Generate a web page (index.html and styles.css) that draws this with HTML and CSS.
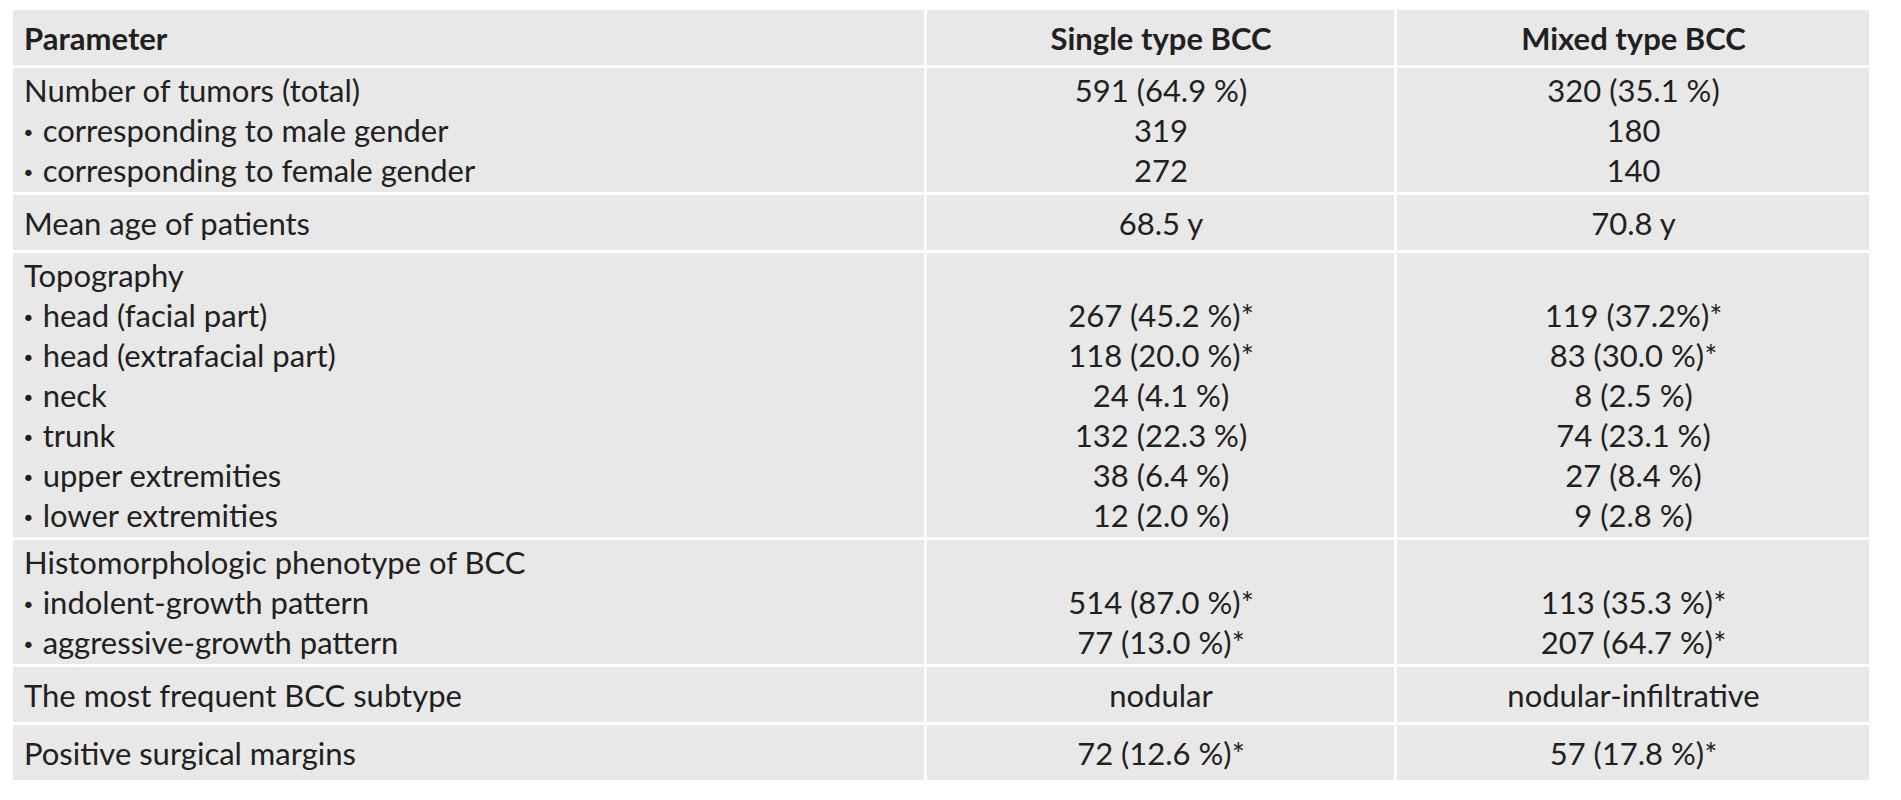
FILE: index.html
```html
<!DOCTYPE html>
<html lang="en">
<head>
<meta charset="utf-8">
<title>BCC parameters</title>
<link rel="stylesheet" href="styles.css">
</head>
<body>
<table class="data">
  <colgroup>
    <col class="c-param">
    <col class="c-single">
    <col class="c-mixed">
  </colgroup>
  <thead>
    <tr>
      <th class="param">Parameter</th>
      <th>Single type BCC</th>
      <th>Mixed type BCC</th>
    </tr>
  </thead>
  <tbody>
    <tr>
      <td class="param">Number of tumors (total)<br><span class="b">·</span> corresponding to male gender<br><span class="b">·</span> corresponding to female gender</td>
      <td>591 (64.9 %)<br>319<br>272</td>
      <td>320 (35.1 %)<br>180<br>140</td>
    </tr>
    <tr>
      <td class="param">Mean age of patients</td>
      <td>68.5 y</td>
      <td>70.8 y</td>
    </tr>
    <tr>
      <td class="param">Topography<br><span class="b">·</span> head (facial part)<br><span class="b">·</span> head (extrafacial part)<br><span class="b">·</span> neck<br><span class="b">·</span> trunk<br><span class="b">·</span> upper extremities<br><span class="b">·</span> lower extremities</td>
      <td>&nbsp;<br>267 (45.2 %)*<br>118 (20.0 %)*<br>24 (4.1 %)<br>132 (22.3 %)<br>38 (6.4 %)<br>12 (2.0 %)</td>
      <td>&nbsp;<br>119 (37.2%)*<br>83 (30.0 %)*<br>8 (2.5 %)<br>74 (23.1 %)<br>27 (8.4 %)<br>9 (2.8 %)</td>
    </tr>
    <tr>
      <td class="param">Histomorphologic phenotype of BCC<br><span class="b">·</span> indolent-growth pattern<br><span class="b">·</span> aggressive-growth pattern</td>
      <td>&nbsp;<br>514 (87.0 %)*<br>77 (13.0 %)*</td>
      <td>&nbsp;<br>113 (35.3 %)*<br>207 (64.7 %)*</td>
    </tr>
    <tr>
      <td class="param">The most frequent BCC subtype</td>
      <td>nodular</td>
      <td>nodular-infiltrative</td>
    </tr>
    <tr>
      <td class="param">Positive surgical margins</td>
      <td>72 (12.6 %)*</td>
      <td>57 (17.8 %)*</td>
    </tr>
  </tbody>
</table>
</body>
</html>
```

FILE: styles.css
```css
html, body {
  margin: 0;
  padding: 0;
  background: #ffffff;
}

body {
  font-family: Lato, "Open Sans", "Liberation Sans", sans-serif;
  color: #231f20;
}

.data {
  border-collapse: separate;
  border-spacing: 3px;
  margin: 7px 0 0 10px;
  width: 1862px;
  table-layout: fixed;
  font-size: 31px;
  line-height: 40px;
}

.c-param { width: 911px; }
.c-single { width: 467px; }
.c-mixed { width: 472px; }

.data tr {
  height: 55px;
}

.data th,
.data td {
  background: #e8e8e8;
  padding: 2px 10px 2px 11px;
  text-align: center;
  vertical-align: middle;
  white-space: nowrap;
}

.data th {
  font-weight: 700;
}

.data .param {
  text-align: left;
}

.b {
  font-weight: 900;
  margin-right: 2px;
}
```
